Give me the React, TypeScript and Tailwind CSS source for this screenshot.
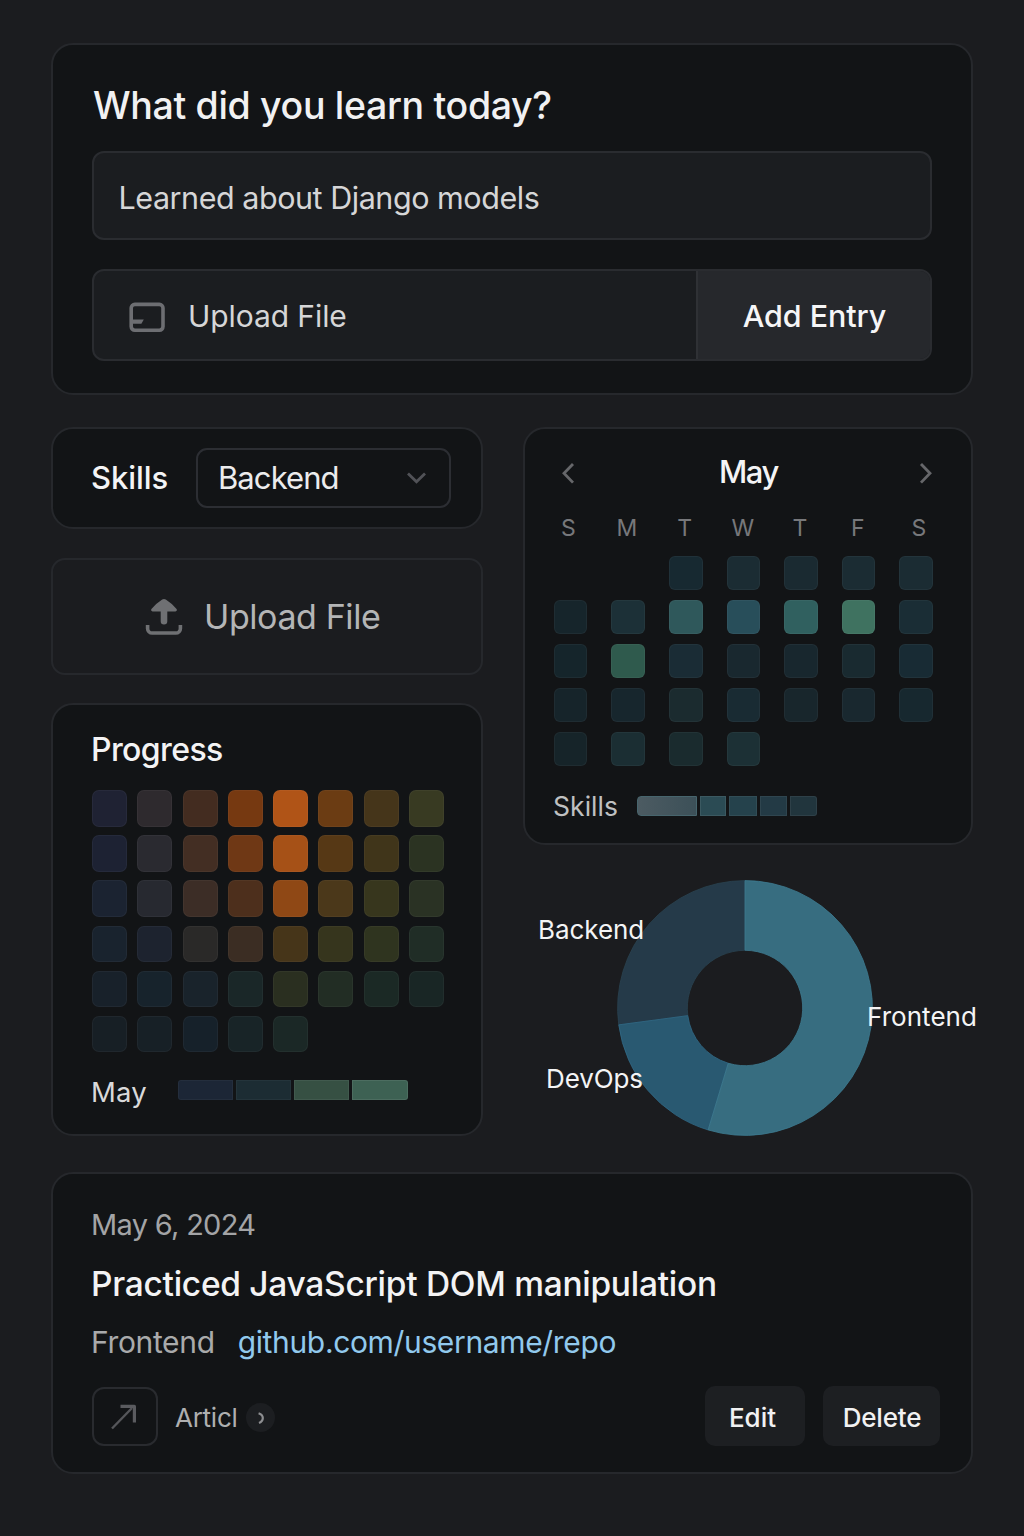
import React from "react";

const progressRows: string[][] = [
  ["#1f2233", "#2e2a2e", "#432c20", "#763911", "#b05417", "#6b3c13", "#45351a", "#383a22"],
  ["#1d2233", "#2a2a30", "#432e23", "#6f3815", "#a65117", "#563815", "#40351a", "#2b3322"],
  ["#1b2331", "#272930", "#3c2d26", "#4d2f1c", "#8f4815", "#4b381a", "#37361d", "#2a3224"],
  ["#19232e", "#1d232f", "#2a2928", "#3b2d23", "#463519", "#36351d", "#2f341f", "#202d26"],
  ["#18212a", "#17232c", "#19232b", "#1a2728", "#2a2f20", "#222d24", "#1b2925", "#192625"],
  ["#171f25", "#172026", "#16212a", "#182427", "#1b2826"],
];

const calendarRows: (string | null)[][] = [
  [null, null, "#172931", "#1b2c33", "#1a2a31", "#1b2c33", "#1b2c33"],
  ["#16252b", "#1c3037", "#2f585b", "#284e5a", "#30605f", "#3f7260", "#1a2d35"],
  ["#15252b", "#2f5a4d", "#1a2c35", "#19282f", "#18272e", "#192a30", "#182b34"],
  ["#16242a", "#17262d", "#1b2b2f", "#192b33", "#18262c", "#19282f", "#17282f"],
  ["#162429", "#1b2e33", "#1a2b2e", "#1c3035", null, null, null],
];

const weekdays = ["S", "M", "T", "W", "T", "F", "S"];

function UploadIcon() {
  return (
    <svg className="h-[38px] w-[38px] shrink-0" viewBox="0 0 38 38" fill="none">
      <path
        d="M17.2 1.6Q19 .4 20.8 1.6Q28 6.3 31.8 11.2Q32.4 13.2 30.4 13.4H22.3V23.2a3.3 3.3 0 0 1-6.6 0V13.4H7.6Q5.6 13.2 6.2 11.2Q10 6.3 17.2 1.6Z"
        fill="#6f7073"
      />
      <path d="M2.6 27V30.4a4.6 4.6 0 0 0 4.6 4.6H30.8a4.6 4.6 0 0 0 4.6-4.6V27" stroke="#6f7073" strokeWidth="3.6" />
    </svg>
  );
}

function PanelIcon() {
  return (
    <svg className="h-[31px] w-[37px] shrink-0" viewBox="0 0 37 31" fill="none">
      <rect x="2.2" y="2.4" width="31.8" height="25.8" rx="3.6" stroke="#6d6e72" strokeWidth="3.6" />
      <path d="M3 17.4H14.8L12.4 21.8H3Z" fill="#6d6e72" />
    </svg>
  );
}

function EntryForm() {
  return (
    <section className="h-[352px] rounded-[22px] border-2 border-[#26282c] bg-[#121416] pt-[37px] pr-[39px] pl-[39px]">
      <h1 className="pl-px text-[37.5px] leading-[48px] font-medium tracking-[-0.33px] text-[#f1f1f2]">
        What did you learn today?
      </h1>
      <div className="mt-[21px] flex h-[89px] items-center rounded-[12px] border-2 border-[#2a2c30] bg-[#1b1d20] pt-1.5 pl-[24.5px] text-[30.5px] leading-none tracking-[-0.46px] text-[#d6d6d7]">
        Learned about Django models
      </div>
      <div className="mt-[29px] flex h-[92px] overflow-hidden rounded-[12px] border-2 border-[#2a2c30] bg-[#1b1d20]">
        <button className="flex flex-1 items-center gap-[22px] pt-1 pl-[35px] text-[30px] leading-none tracking-[-0.08px] text-[#d6d6d7]">
          <PanelIcon />
          <span className="-mt-0.5">Upload File</span>
        </button>
        <button className="w-[234px] border-l-2 border-[#2f3135] bg-[#26282c] pt-0.5 pl-px text-center text-[30.5px] leading-none font-medium tracking-[-0.08px] text-[#f6f6f7]">
          Add Entry
        </button>
      </div>
    </section>
  );
}

function SkillFilter() {
  return (
    <section className="flex h-[102px] items-center rounded-[22px] border-2 border-[#26282c] bg-[#121416] pl-[38px]">
      <span className="-mt-0.5 w-[105px] text-[31px] leading-none font-medium tracking-[-0.06px] text-[#f4f4f5]">
        Skills
      </span>
      <button className="flex h-[60px] w-[255px] items-center justify-between rounded-[11px] border-2 border-[#2c2e33] pr-[22px] pb-px pl-5 text-[31px] leading-none tracking-[-0.92px] text-[#ececed]">
        Backend
        <svg className="mt-px h-[14px] w-[21px]" viewBox="0 0 21 14" fill="none">
          <path d="M2 2.5L10.5 10.8L19 2.5" stroke="#515257" strokeWidth="2.8" />
        </svg>
      </button>
    </section>
  );
}

function Progress() {
  return (
    <section className="h-[433px] rounded-[22px] border-2 border-[#26282c] bg-[#121416] pt-[25px] pl-[39px]">
      <h2 className="-ml-px text-[32px] leading-[40px] font-medium tracking-[-0.6px] text-[#f4f4f5]">Progress</h2>
      <div className="mt-[20px] flex flex-col gap-[8.7px]">
        {progressRows.map((row, y) => (
          <div key={y} className="flex gap-[10.3px]">
            {row.map((color, x) => (
              <div
                key={x}
                className="h-[36.5px] w-[35px] rounded-[7px] border border-white/4"
                style={{ backgroundColor: color }}
              />
            ))}
          </div>
        ))}
      </div>
      <div className="mt-[17px] flex items-center">
        <span className="-ml-px w-[87px] pt-[5px] text-[27.5px] leading-[36px] tracking-[0.2px] text-[#d9d9da]">May</span>
        <div className="flex gap-[3px]">
          <div className="h-[19.5px] w-[55px] rounded-l-[3px] border border-white/4 bg-[#1c2636]" />
          <div className="h-[19.5px] w-[55px] border border-white/4 bg-[#1c2c33]" />
          <div className="h-[19.5px] w-[54.5px] border border-white/6 bg-[#365043]" />
          <div className="h-[19.5px] w-[56.5px] rounded-r-[3px] border border-white/8 bg-[#3d6153]" />
        </div>
      </div>
    </section>
  );
}

function Calendar() {
  return (
    <section className="h-[418px] rounded-[22px] border-2 border-[#26282c] bg-[#121416] pt-[23px]">
      <div className="flex h-10 items-center justify-between pr-[37px] pl-[35px]">
        <svg className="mt-px h-6 w-4" viewBox="0 0 16 24" fill="none">
          <path d="M13 3L4 12.3L13 21.6" stroke="#66676a" strokeWidth="2.8" />
        </svg>
        <h2 className="pb-0.5 pl-[3px] text-[31px] leading-none font-medium tracking-[-1.4px] text-[#f4f4f5]">May</h2>
        <svg className="mt-px h-6 w-4" viewBox="0 0 16 24" fill="none">
          <path d="M3 3L12 12.3L3 21.6" stroke="#66676a" strokeWidth="2.8" />
        </svg>
      </div>
      <div className="mt-[21px] ml-[27px] grid grid-cols-[repeat(7,33.6px)] gap-x-[24.1px] text-center text-[23px] leading-[30px] text-[#77787b]">
        {weekdays.map((day, i) => (
          <span key={i} className={i === 0 ? "pr-px" : i === 3 ? "pl-0.5" : i === 6 ? "pl-2" : "pl-px"}>
            {day}
          </span>
        ))}
      </div>
      <div className="mt-[13px] ml-[28.8px] flex flex-col gap-[10.1px]">
        {calendarRows.map((row, y) => (
          <div key={y} className="flex gap-[24px]">
            {row.map((color, x) =>
              color ? (
                <div
                  key={x}
                  className="h-[34px] w-[33.6px] rounded-[6px] border border-white/4"
                  style={{ backgroundColor: color }}
                />
              ) : (
                <div key={x} className="h-[34px] w-[33.6px]" />
              ),
            )}
          </div>
        ))}
      </div>
      <div className="mt-[21px] ml-[28px] flex items-center">
        <span className="w-[84px] pt-px text-[26.5px] leading-[36px] tracking-[0.05px] text-[#bfc0c1]">Skills</span>
        <div className="flex gap-[3px]">
          <div className="h-[20.5px] w-[60px] rounded-l-[4px] border border-[#47656d] bg-linear-to-r from-[#4c5b62] to-[#3c5058]" />
          <div className="h-[20.5px] w-[26px] border border-white/8 bg-[#2b4b54]" />
          <div className="h-[20.5px] w-[27.5px] border border-white/6 bg-[#25424c]" />
          <div className="h-[20.5px] w-[27px] border border-white/6 bg-[#233a45]" />
          <div className="h-[20.5px] w-[27px] rounded-r-[3px] border border-white/6 bg-[#21353d]" />
        </div>
      </div>
    </section>
  );
}

const CX = 128;
const CY = 128;

function point(radius: number, degrees: number) {
  const a = ((degrees - 90) * Math.PI) / 180;
  return `${(CX + radius * Math.cos(a)).toFixed(2)} ${(CY + radius * Math.sin(a)).toFixed(2)}`;
}

function ringSlice(from: number, to: number) {
  const outer = 127.4;
  const inner = 57.7;
  const large = to - from > 180 ? 1 : 0;
  return `M${point(outer, from)}A${outer} ${outer} 0 ${large} 1 ${point(outer, to)}L${point(inner, to)}A${inner} ${inner} 0 ${large} 0 ${point(inner, from)}Z`;
}

function SkillDonut() {
  return (
    <section className="relative h-[291px] pt-[35px] pl-[94px] text-[26px] leading-[30px] whitespace-nowrap text-[#f4f4f5]">
      <svg className="h-[256px] w-[256px]" viewBox="0 0 256 256">
        <path d={ringSlice(262.4, 360)} fill="#253a49" stroke="#2a4251" strokeWidth="0.8" />
        <path d={ringSlice(196.8, 262.4)} fill="#295971" stroke="#316a86" strokeWidth="0.8" />
        <path d={ringSlice(0, 196.8)} fill="#376d80" stroke="#3d7b90" strokeWidth="0.8" />
      </svg>
      <span className="absolute top-[70px] left-[15px] tracking-[-0.05px]">Backend</span>
      <span className="absolute top-[157px] left-[344px] tracking-[0.05px]">Frontend</span>
      <span className="absolute top-[218.5px] left-[23px] tracking-[-0.1px]">DevOps</span>
    </section>
  );
}

function LogEntry() {
  return (
    <section className="mt-9 h-[302px] rounded-[22px] border-2 border-[#26282c] bg-[#121416] pt-[33px] pr-[31px] pl-[38px]">
      <p className="text-[29px] leading-[36px] tracking-[-0.7px] text-[#a3a4a6]">May 6, 2024</p>
      <h2 className="mt-[20px] text-[33.5px] leading-[42px] font-medium tracking-[-0.28px] text-[#f3f3f4]">
        Practiced JavaScript DOM manipulation
      </h2>
      <p className="mt-[18px] flex gap-[23px] text-[30px] leading-[38px] tracking-[-0.35px] text-[#a9aaab]">
        <span>Frontend</span>
        <a className="text-[#91c9ed]">github.com/username/repo</a>
      </p>
      <div className="mt-[25px] flex h-[60px] items-center">
        <div className="ml-px h-[59px] w-[66px] rounded-[12px] border-2 border-[#292b2f]">
          <svg className="h-full w-full" viewBox="0 0 62 55" fill="none">
            <path d="M18 39.5L38 19" stroke="#55565a" strokeWidth="2.4" />
            <path d="M26.5 17.4H40.4V33.5" stroke="#5a5b5f" strokeWidth="3.2" strokeLinejoin="round" />
          </svg>
        </div>
        <span className="ml-[17px] pt-[3px] text-[26px] leading-[32px] tracking-[-0.26px] text-[#aeafb0]">Articl</span>
        <div className="mt-[3px] ml-2 flex size-[29px] items-center justify-center rounded-full bg-[#1c1e21]">
          <svg className="h-[14px] w-[10px]" viewBox="0 0 10 14" fill="none">
            <path d="M3.6 2.2Q7.8 3.6 7.8 7Q7.8 10.4 4 12" stroke="#8d8e91" strokeWidth="2.2" />
          </svg>
        </div>
        <button className="ml-auto h-[60px] w-[100px] rounded-[10px] bg-[#1d1f22] pt-1 pr-[5px] text-[26px] leading-[32px] font-medium text-[#f1f1f2]">
          Edit
        </button>
        <button className="ml-[18px] h-[60px] w-[117px] rounded-[10px] bg-[#1d1f22] pt-1 pl-px text-[26px] leading-[32px] font-medium tracking-[-0.2px] text-[#f1f1f2]">
          Delete
        </button>
      </div>
    </section>
  );
}

export default function App() {
  return (
    <main className="min-h-[1536px] w-[1024px] bg-[#1b1c1f] px-[51px] pt-[43px] font-['Inter',sans-serif]">
      <EntryForm />
      <div className="mt-8 flex gap-10">
        <div className="w-[432px]">
          <SkillFilter />
          <button className="mt-[29px] flex h-[117px] w-full items-center rounded-[14px] border-2 border-[#26282c] pl-[92px] text-[34px] leading-none tracking-[-0.41px] text-[#b4b5b6]">
            <UploadIcon />
            <span className="ml-[21px]">Upload File</span>
          </button>
          <div className="mt-7">
            <Progress />
          </div>
        </div>
        <div className="w-[450px]">
          <Calendar />
          <SkillDonut />
        </div>
      </div>
      <LogEntry />
    </main>
  );
}
